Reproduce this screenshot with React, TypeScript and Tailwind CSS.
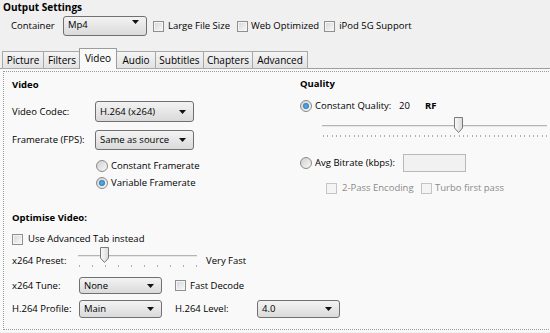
import React from "react";

const Check = ({ disabled }: { disabled?: boolean }) => (
  <div
    className={
      disabled
        ? "w-[11px] h-[11px] shrink-0 border border-[#c4c4c4] bg-[#f4f4f4]"
        : "w-[11px] h-[11px] shrink-0 border border-[#8e8f8f] bg-linear-to-br from-[#d6d6d6] to-[#fafafa] shadow-[inset_0_0_0_1px_#f4f4f4]"
    }
  />
);

const Radio = ({ on }: { on?: boolean }) => (
  <div className="w-[12px] h-[12px] shrink-0 rounded-full border border-[#8a8a8a] bg-linear-to-br from-[#d0d0d0] to-[#f8f8f8] flex items-center justify-center">
    {on && (
      <div className="w-[6px] h-[6px] rounded-full bg-radial from-[#5fb3ea] to-[#1b6aa8]" />
    )}
  </div>
);

const Arrow = () => (
  <svg width="7" height="4" viewBox="0 0 7 4">
    <polygon points="0,0 7,0 3.5,4" fill="#111" />
  </svg>
);

const Select = ({ value, cls }: { value: string; cls: string }) => (
  <div
    className={`flex items-center justify-between shrink-0 border border-[#707070] rounded-[3px] bg-linear-to-b from-[#f3f3f3] to-[#dadada] pl-[4px] pr-[7px] ${cls}`}
  >
    <span>{value}</span>
    <Arrow />
  </div>
);

const Thumb = ({ x }: { x: number }) => (
  <g transform={`translate(${x},0)`}>
    <defs>
      <linearGradient id="tg" x1="0" y1="0" x2="1" y2="0">
        <stop offset="0" stopColor="#fbfbfb" />
        <stop offset="1" stopColor="#d9d9d9" />
      </linearGradient>
    </defs>
    <polygon
      points="0.5,0.5 8.5,0.5 8.5,11 4.5,15.5 0.5,11"
      fill="url(#tg)"
      stroke="#7a7a7a"
      strokeWidth="1"
    />
  </g>
);

const Slider = ({
  width,
  ticks,
  thumbX,
}: {
  width: number;
  ticks: number;
  thumbX: number;
}) => {
  const ts: number[] = [];
  for (let i = 0; i < ticks; i++) ts.push(1 + Math.round((i * (width - 3)) / (ticks - 1)));
  return (
    <svg width={width} height="22" viewBox={`0 0 ${width} 22`} className="shrink-0">
      <rect x="0" y="8" width={width - 1} height="1" fill="#b5b5b5" />
      <rect x="0" y="9" width={width - 1} height="1" fill="#e7e7e7" />
      {ts.map((t, i) => (
        <rect key={i} x={t} y="18" width="1" height="2" fill="#b0b0b0" />
      ))}
      <Thumb x={thumbX} />
    </svg>
  );
};

export default function App() {
  const tabs = [
    { t: "Picture", w: "w-[41px]" },
    { t: "Filters", w: "w-[37px]" },
    { t: "Video", w: "w-[38px]", sel: true },
    { t: "Audio", w: "w-[39px]" },
    { t: "Subtitles", w: "w-[48px]" },
    { t: "Chapters", w: "w-[49px]" },
    { t: "Advanced", w: "w-[56px]" },
  ];
  return (
    <div className="w-[550px] h-[333px] overflow-hidden bg-[#f0f0f0] text-black text-[9.5px] leading-none font-['Open_Sans',sans-serif]">
      <div className="h-[15px] pl-[3px] pt-[2px] font-bold text-[10px]">Output Settings</div>
      <div className="flex items-center h-[20px] mt-[1px] pl-[11px]">
        <span className="w-[52px]">Container</span>
        <Select value="Mp4" cls="w-[84px] h-[20px] items-start! pt-[3px]" />
        <div className="flex items-center ml-[6px] gap-[4px]">
          <Check />
          <span>Large File Size</span>
        </div>
        <div className="flex items-center ml-[7px] gap-[3px]">
          <Check />
          <span>Web Optimized</span>
        </div>
        <div className="flex items-center ml-[5px] gap-[4px]">
          <Check />
          <span>iPod 5G Support</span>
        </div>
      </div>
      {/* tabs */}
      <div className="flex items-end h-[20px] mt-[13px] pl-[2px] mb-[-1px] relative z-10 text-[10px]">
        {tabs.map((tb) =>
          tb.sel ? (
            <div
              key={tb.t}
              className={`${tb.w} h-[21px] -mx-[1px] border border-b-0 border-[#9c9c9c] bg-[#f9f9f9] flex items-center justify-center pb-[2px] relative z-10`}
            >
              {tb.t}
            </div>
          ) : (
            <div
              key={tb.t}
              className={`${tb.w} h-[18px] border border-r-0 last:border-r border-[#a8a8a8] bg-linear-to-b from-[#f4f4f4] to-[#e2e2e2] flex items-center justify-center`}
            >
              {tb.t}
            </div>
          )
        )}
      </div>
      <div className="border-t border-[#9c9c9c] bg-[#f9f9f9] h-[264px] pt-[2px] pl-[3px]">
        <div className="w-[560px] h-[259px] border border-dotted border-[#9a9a9a] pl-[8px]">
          <div className="flex">
            {/* left column */}
            <div className="w-[288px] pt-[5px]">
              <div className="h-[16px] flex items-center font-bold">Video</div>
              <div className="flex items-center h-[21px] mt-[8px]">
                <span className="w-[83px]">Video Codec:</span>
                <Select value="H.264 (x264)" cls="w-[99px] h-[21px]" />
              </div>
              <div className="flex items-center h-[20px] mt-[8px]">
                <span className="w-[83px]">Framerate (FPS):</span>
                <Select value="Same as source" cls="w-[99px] h-[20px]" />
              </div>
              <div className="flex items-center gap-[3px] h-[16px] mt-[8px] pl-[84px]">
                <Radio />
                <span>Constant Framerate</span>
              </div>
              <div className="flex items-center gap-[3px] h-[16px] mt-[1px] pl-[84px]">
                <Radio on />
                <span>Variable Framerate</span>
              </div>
            </div>
            {/* right column */}
            <div className="pt-[4px]">
              <div className="h-[16px] flex items-center font-bold">Quality</div>
              <div className="flex items-center h-[16px] mt-[6px]">
                <Radio on />
                <span className="ml-[3px] w-[84px]">Constant Quality:</span>
                <span className="w-[26px]">20</span>
                <span className="font-bold">RF</span>
              </div>
              <div className="mt-[3px] ml-[22px]">
                <Slider width={226} ticks={52} thumbX={132} />
              </div>
              <div className="flex items-center h-[18px] mt-[15px]">
                <Radio />
                <span className="ml-[3px] w-[88px]">Avg Bitrate (kbps):</span>
                <div className="w-[63px] h-[18px] border border-[#b9b9b9] bg-[#f1f1f1]" />
              </div>
              <div className="flex items-center h-[16px] mt-[8px] pl-[26px] text-[#8a8a8a]">
                <Check disabled />
                <span className="ml-[5px] w-[79px]">2-Pass Encoding</span>
                <Check disabled />
                <span className="ml-[3px]">Turbo first pass</span>
              </div>
            </div>
          </div>
          {/* optimise */}
          <div className="h-[16px] flex items-center font-bold mt-[14px]">Optimise Video:</div>
          <div className="flex items-center gap-[5px] h-[16px] mt-[5px]">
            <Check />
            <span>Use Advanced Tab instead</span>
          </div>
          <div className="flex items-start h-[20px]">
            <span className="w-[66px] mt-[9px]">x264 Preset:</span>
            <Slider width={120} ticks={10} thumbX={22} />
            <span className="ml-[8px] mt-[9px]">Very Fast</span>
          </div>
          <div className="flex items-center h-[17px] mt-[10px]">
            <span className="w-[67px]">x264 Tune:</span>
            <Select value="None" cls="w-[83px] h-[17px]" />
            <div className="ml-[13px] flex items-center gap-[4px]">
              <Check />
              <span>Fast Decode</span>
            </div>
          </div>
          <div className="flex items-center h-[18px] mt-[6px]">
            <span className="w-[67px]">H.264 Profile:</span>
            <Select value="Main" cls="w-[83px] h-[18px]" />
            <span className="ml-[13px] w-[82px]">H.264 Level:</span>
            <Select value="4.0" cls="w-[83px] h-[18px]" />
          </div>
        </div>
      </div>
    </div>
  );
}
